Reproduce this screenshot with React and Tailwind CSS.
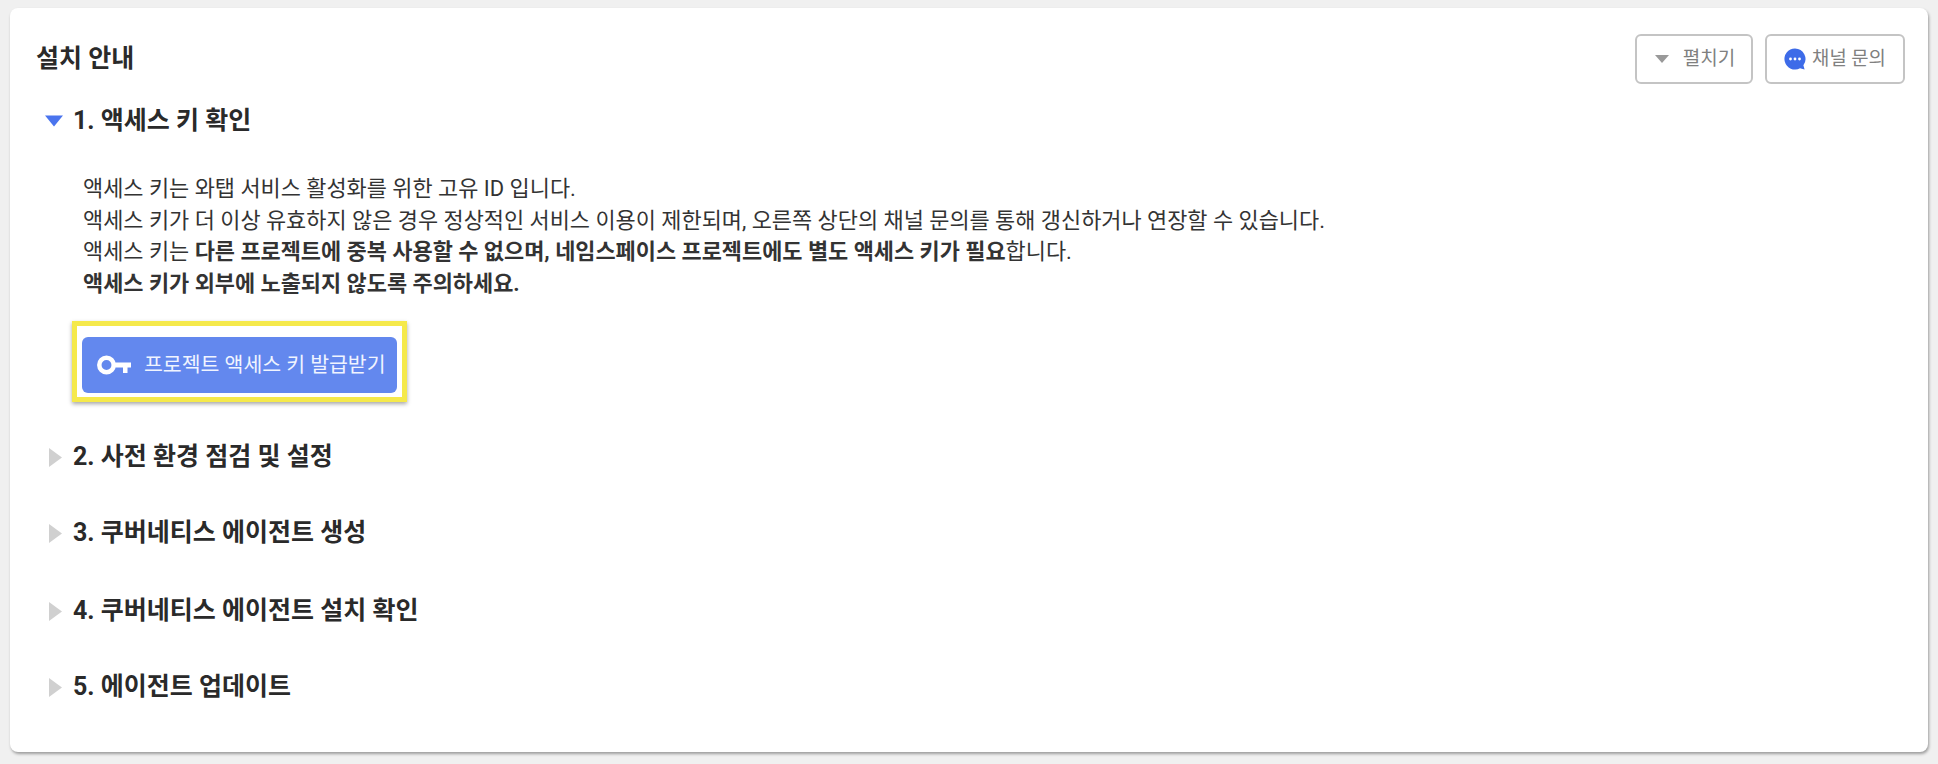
import React from 'react';

const sans = "font-['Roboto','Noto_Sans_CJK_KR',sans-serif]";

const Caret = ({ open }) =>
  open ? (
    <svg width="18" height="12" viewBox="0 0 18 12" className="shrink-0">
      <path d="M0 0.5H18L9 11.5Z" fill="#4a74ee" />
    </svg>
  ) : (
    <svg width="13" height="19" viewBox="0 0 13 19" className="shrink-0 ml-[4px] mr-[1px]">
      <path d="M0 0L13 9.5L0 19Z" fill="#d0d0d0" />
    </svg>
  );

const SectionTitle = ({ open, children, className }) => (
  <div className={`flex items-center h-[30px] pl-[35px] gap-[10px] ${className}`}>
    <Caret open={open} />
    <h3 className="text-[25px] leading-[30px] font-bold text-[#2a2a2a]">{children}</h3>
  </div>
);

const App = () => {
  return (
    <div className={`w-[1938px] h-[764px] bg-[#f0f0f0] pt-[8px] pl-[10px] overflow-hidden ${sans}`}>
      <div className="w-[1918px] h-[744px] bg-white rounded-[8px] shadow-[1px_2px_3px_rgba(0,0,0,0.35)] flex flex-col">
        <div className="flex items-center justify-between pl-[26px] pr-[23px] pt-[25px]">
          <h2 className="text-[25px] leading-[52px] font-bold text-[#2a2a2a]">설치 안내</h2>
          <div className="flex gap-[12px]">
            <button className="w-[118px] h-[50px] border-2 border-[#c4c4c4] rounded-[6px] flex items-center justify-center gap-[14px] pl-[2px] text-[19px] text-[#808080]">
              <svg width="14" height="8" viewBox="0 0 14 8">
                <path d="M0 0H14L7 8Z" fill="#999999" />
              </svg>
              펼치기
            </button>
            <button className="w-[140px] h-[50px] border-2 border-[#c4c4c4] rounded-[6px] flex items-center justify-center gap-[6px] text-[18.8px] text-[#808080]">
              <svg width="22" height="22" viewBox="0 0 22 22">
                <path d="M11 0.5a10.5 10.5 0 1 0 5 19.7l4.6 1.3l-1.2-4.3A10.5 10.5 0 0 0 11 0.5Z" fill="#3d6be8" />
                <circle cx="6.5" cy="11" r="1.4" fill="#fff" />
                <circle cx="11" cy="11" r="1.4" fill="#fff" />
                <circle cx="15.5" cy="11" r="1.4" fill="#fff" />
              </svg>
              채널 문의
            </button>
          </div>
        </div>

        <SectionTitle open className="mt-[21px]">1. 액세스 키 확인</SectionTitle>

        <div className="pl-[73px] mt-[37px] text-[21.92px] leading-[31.6px] text-[#333333]">
          <p>액세스 키는 와탭 서비스 활성화를 위한 고유 ID 입니다.</p>
          <p>액세스 키가 더 이상 유효하지 않은 경우 정상적인 서비스 이용이 제한되며, 오른쪽 상단의 채널 문의를 통해 갱신하거나 연장할 수 있습니다.</p>
          <p>
            액세스 키는 <b className="font-bold">다른 프로젝트에 중복 사용할 수 없으며, 네임스페이스 프로젝트에도 별도 액세스 키가 필요</b>합니다.
          </p>
          <p className="font-bold">액세스 키가 외부에 노출되지 않도록 주의하세요.</p>
        </div>

        <div className="ml-[62px] mt-[22px] w-[335px] h-[81px] border-[5px] border-[#f5e94b] shadow-[0_2px_4px_rgba(0,0,0,0.35)] pt-[11px] pl-[5px] bg-white">
          <button className="w-[315px] h-[56px] bg-[#6388ee] rounded-[6px] flex items-center pl-[15px] gap-[13px] text-[20.5px] text-[#f0f4ff]">
            <svg width="34" height="24" viewBox="0 0 34 24">
              <circle cx="9.5" cy="12" r="7.2" fill="none" stroke="#fff" strokeWidth="4.5" />
              <path d="M16 9.5H34V14.5H30.5V20H26V14.5H16Z" fill="#fff" />
            </svg>
            프로젝트 액세스 키 발급받기
          </button>
        </div>

        <SectionTitle className="mt-[40px]">2. 사전 환경 점검 및 설정</SectionTitle>
        <SectionTitle className="mt-[46px]">3. 쿠버네티스 에이전트 생성</SectionTitle>
        <SectionTitle className="mt-[48px]">4. 쿠버네티스 에이전트 설치 확인</SectionTitle>
        <SectionTitle className="mt-[46px]">5. 에이전트 업데이트</SectionTitle>
      </div>
    </div>
  );
};

export default App;
